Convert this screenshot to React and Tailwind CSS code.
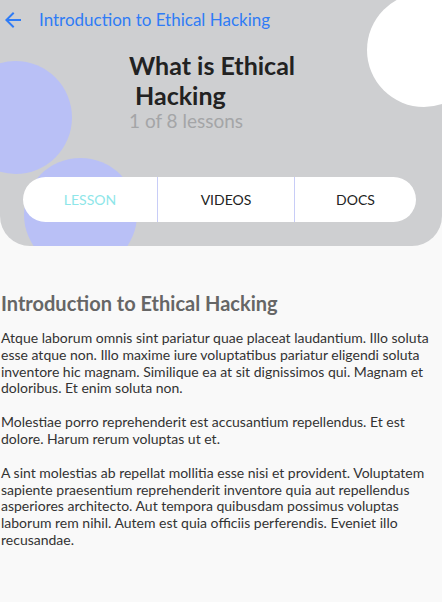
import React from "react";

function ArrowBack() {
  return (
    <svg width="24" height="24" viewBox="0 0 24 24" fill="#2f7cf6" className="shrink-0">
      <path d="M20 11H7.83l5.59-5.59L12 4l-8 8 8 8 1.41-1.41L7.83 13H20v-2z" />
    </svg>
  );
}

export default function App() {
  return (
    <div className="min-h-[602px] bg-[#f9f9f9] font-['Lato','Noto_Sans',sans-serif]">
      <header className="relative h-[246px] overflow-hidden rounded-b-[30px] bg-[#cecfd1]">
        <div className="absolute left-[-41px] top-[61px] h-[113px] w-[113px] rounded-full bg-[#b9c0f6]" />
        <div className="absolute left-[24px] top-[158px] h-[113px] w-[113px] rounded-full bg-[#b9c0f6]" />
        <div className="absolute left-[367px] top-[-7px] h-[114px] w-[114px] rounded-full bg-white" />

        <div className="relative flex h-[32px] items-start pl-[1px] pt-[8px]">
          <ArrowBack />
          <span className="ml-[14px] mt-[2px] text-[17px] leading-[1.2] text-[#2f7cf6]">
            Introduction to Ethical Hacking
          </span>
        </div>

        <div className="relative mx-auto mt-[18px] w-[184px]">
          <h1 className="text-[25px] font-bold leading-[30px] text-[#222222]">
            What is Ethical
            <br />
            {"\u00a0"}Hacking
          </h1>
          <p className="text-[19px] leading-[1.2] text-[#a4a5a7]">1 of 8 lessons</p>
        </div>

        <div className="relative ml-[23px] mt-[44px] flex h-[45px] w-[393px] overflow-hidden rounded-full bg-white text-[14px]">
          <div className="flex w-[134px] items-center justify-center text-[#8ee6e9]">LESSON</div>
          <div className="flex w-[137px] items-center justify-center border-l border-[#c8cdf7] text-[#222222]">VIDEOS</div>
          <div className="flex flex-1 items-center justify-center border-l border-[#c8cdf7] text-[#222222]">DOCS</div>
        </div>
      </header>

      <main className="px-px pt-[45px]">
        <h2 className="text-[20px] font-bold leading-[1.2] text-[#666666]">Introduction to Ethical Hacking</h2>
        <div className="mt-[15px] text-[14px] leading-[1.2] text-[#333333]">
          <p>
            Atque laborum omnis sint pariatur quae placeat laudantium. Illo soluta esse atque non. Illo maxime iure
            voluptatibus pariatur eligendi soluta inventore hic magnam. Similique ea at sit dignissimos qui. Magnam et
            doloribus. Et enim soluta non.
          </p>
          <p className="mt-[17px]">
            Molestiae porro reprehenderit est accusantium repellendus. Et est dolore. Harum rerum voluptas ut et.
          </p>
          <p className="mt-[17px]">
            A sint molestias ab repellat mollitia esse nisi et provident. Voluptatem sapiente praesentium reprehenderit
            inventore quia aut repellendus asperiores architecto. Aut tempora quibusdam possimus voluptas laborum rem
            nihil. Autem est quia officiis perferendis. Eveniet illo recusandae.
          </p>
        </div>
      </main>
    </div>
  );
}
